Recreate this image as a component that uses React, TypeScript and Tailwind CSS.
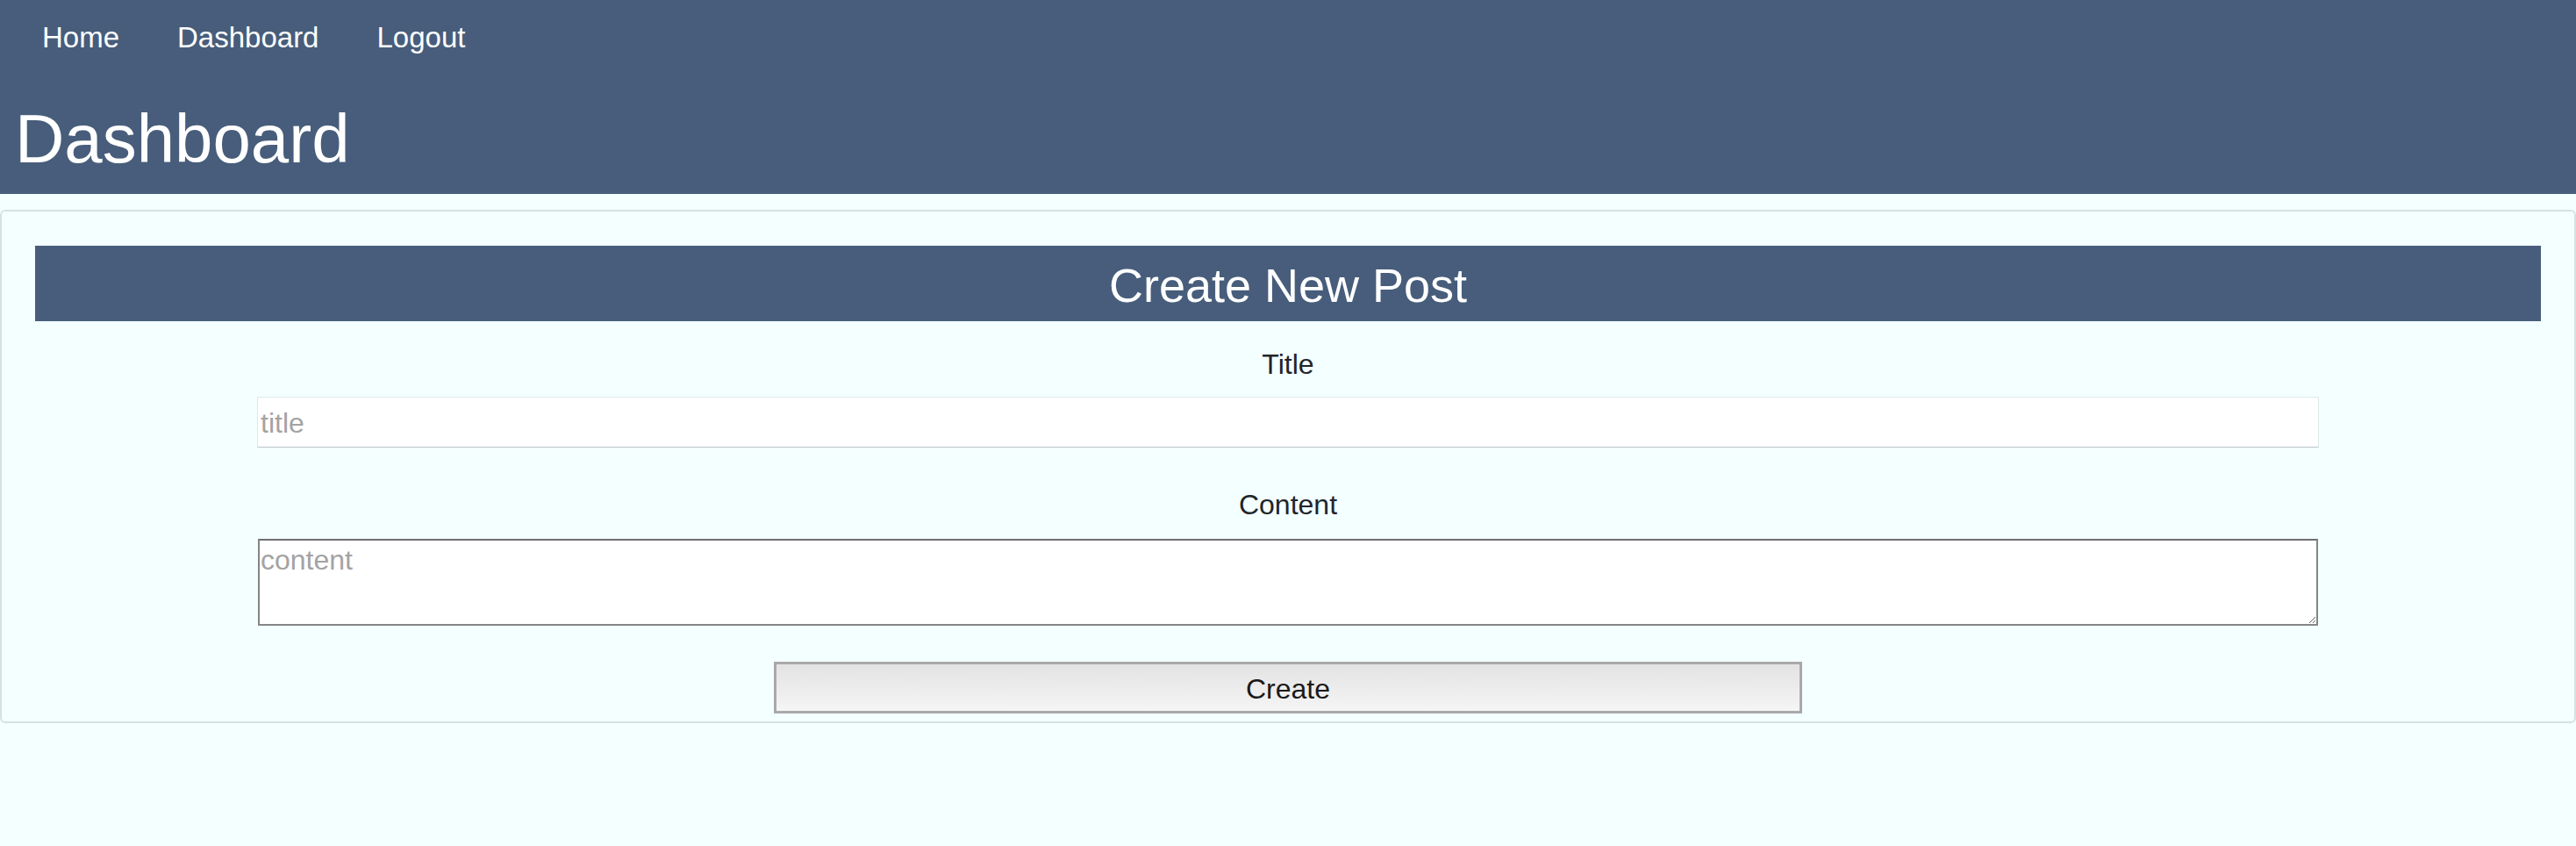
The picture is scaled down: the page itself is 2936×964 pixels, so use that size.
import React from 'react';

const navLinks = ['Home', 'Dashboard', 'Logout'];

const App: React.FC = () => {
  return (
    <div className="min-h-[964px] bg-[#f4ffff] font-['Liberation_Sans',Arial,sans-serif]">
      {/* Top header */}
      <header className="bg-[#475d7b] text-white pt-[27px] pb-[24px]">
        <nav className="flex gap-[66px] pl-[48px]">
          {navLinks.map((link) => (
            <a key={link} href="#" className="text-[33px] leading-[32px]">
              {link}
            </a>
          ))}
        </nav>
        <h1 className="mt-[60px] pl-[17px] text-[78px] leading-[78px] font-normal">Dashboard</h1>
      </header>

      {/* Create post card */}
      <section className="mt-[18px] border-2 border-[#d3e2e2] rounded-[6px] px-[38px] pt-[39px] pb-[9px]">
        <h2 className="h-[86px] bg-[#475d7b] text-white text-[54px] leading-[54px] flex items-center justify-center pt-[3px]">
          Create New Post
        </h2>

        <form className="flex flex-col items-center" onSubmit={(e) => e.preventDefault()}>
          <label htmlFor="title" className="mt-[33px] text-[32px] leading-[32px] text-[#212529]">
            Title
          </label>
          <input
            id="title"
            type="text"
            placeholder="title"
            className="mt-[21px] w-[2350px] h-[58px] bg-white border border-[#dfe8ea] border-b-[#bcc4c8] px-[3px] pt-[3px] text-[32px] text-[#212529] placeholder:text-[#a3a3a3] outline-none"
          />

          <label htmlFor="content" className="mt-[49px] text-[32px] leading-[32px] text-[#212529]">
            Content
          </label>
          <textarea
            id="content"
            placeholder="content"
            className="mt-[23px] w-[2348px] h-[99px] bg-white border-2 border-[#858585] border-t-[#6f6f6f] px-[1px] pt-[4px] text-[32px] leading-[37px] text-[#212529] placeholder:text-[#a3a3a3] outline-none resize"
          />

          <button
            type="submit"
            className="mt-[41px] w-[1172px] h-[59px] border-[3px] border-[#a9a9a9] bg-gradient-to-b from-[#e3e3e3] to-[#f6f5f5] text-[32px] leading-[32px] text-[#1a1a1a] pt-[2px]"
          >
            Create
          </button>
        </form>
      </section>
    </div>
  );
};

export default App;
